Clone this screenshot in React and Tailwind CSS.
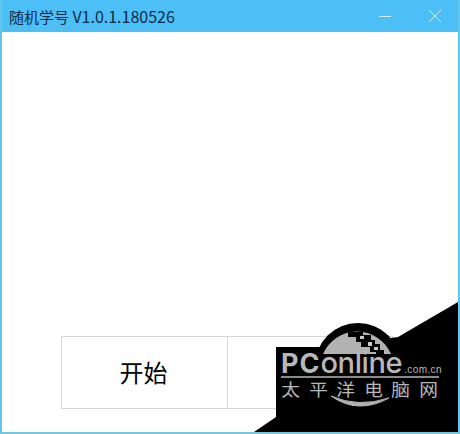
const Watermark = () => (
  <div className="absolute right-0 bottom-0 w-[204px] h-[130px]">
    <svg className="absolute inset-0" width="204" height="130" viewBox="256 304 204 130">
      <polygon points="460,304 460,434 256,434 278,419 278,349 330,349 400,339" fill="#000" />
      <circle cx="360" cy="368" r="43" fill="#000" />
      {/* dome */}
      <path d="M325 356 A37 37 0 0 1 393 356 Z" fill="#b2b2b2" />
      {/* pixel stairs */}
      <path d="M350 334H365V337H373V342H377V346H382V352H386V356H378V354H372V349H363V344H358V339H350Z" fill="#000" />
      <path d="M362 338h4v3h-4zM370 344h4v4h-4zM376 349h4v3h-4z" fill="#c8c8c8" />
      {/* lower arc */}
      <path d="M333 398Q360 417 391 400Q360 410 333 398Z" fill="#b2b2b2" stroke="#b2b2b2" strokeWidth="1" />
      <rect x="283" y="378" width="158" height="2" fill="#8a8a8a" />
    </svg>
    <div className="absolute left-[27px] top-[46px] flex items-baseline text-[#b8b8b8] font-['Inter',sans-serif] leading-none">
      <span className="text-[27px] font-bold tracking-[1px]">PC</span>
      <span className="text-[29px] font-medium tracking-[-0.4px]">online</span>
      <span className="text-[10px] ml-[2px] tracking-[0.4px] font-['Liberation_Sans',sans-serif]">.com.cn</span>
    </div>
    <div className="absolute left-[28px] top-[78px] flex gap-[10.6px] text-[#b8b8b8] text-[17px] leading-none font-['Noto_Sans_CJK_SC',sans-serif]">
      <span className="scale-x-110">太</span>
      <span className="scale-x-110">平</span>
      <span className="scale-x-110">洋</span>
      <span className="scale-x-110">电</span>
      <span className="scale-x-110">脑</span>
      <span className="scale-x-110">网</span>
    </div>
  </div>
);

const App = () => {
  return (
    <div className="relative w-[460px] h-[434px] flex flex-col bg-white overflow-hidden border-x-2 border-b-2 border-x-[#62c6ea] border-b-[#74c8da] font-['Noto_Sans_CJK_SC',sans-serif]">
      <div className="-mx-[2px] h-8 shrink-0 flex items-center justify-between bg-[#4dbff7] pl-[9px]">
        <span className="text-[15px] leading-none text-[#0c2a44]">
          随机学号 <span className="text-[16px]">V1.0.1.180526</span>
        </span>
        <div className="flex items-center">
          <div className="w-[46px] h-8 flex items-center justify-center mr-[4px]">
            <svg width="14" height="14" viewBox="0 0 14 14"><path d="M1 7.5h12" stroke="#d6f1ff" strokeWidth="1" /></svg>
          </div>
          <div className="w-[46px] h-8 flex items-center justify-center mr-[2px]">
            <svg width="14" height="14" viewBox="0 0 14 14"><path d="M1 1l12 12M13 1L1 13" stroke="#d6f1ff" strokeWidth="1" /></svg>
          </div>
        </div>
      </div>
      <div className="flex-1 flex flex-col justify-end pb-[23px] pl-[59px]">
        <div className="flex w-[332px] h-[73px] border border-[#d6d6d6]">
          <button className="w-[166px] h-full flex items-center justify-center pr-[2px] pb-[1px] border-r border-[#d6d6d6] text-[24px] text-black">开始</button>
          <button className="flex-1 h-full"></button>
        </div>
      </div>
      <Watermark />
    </div>
  );
};

export default App;
